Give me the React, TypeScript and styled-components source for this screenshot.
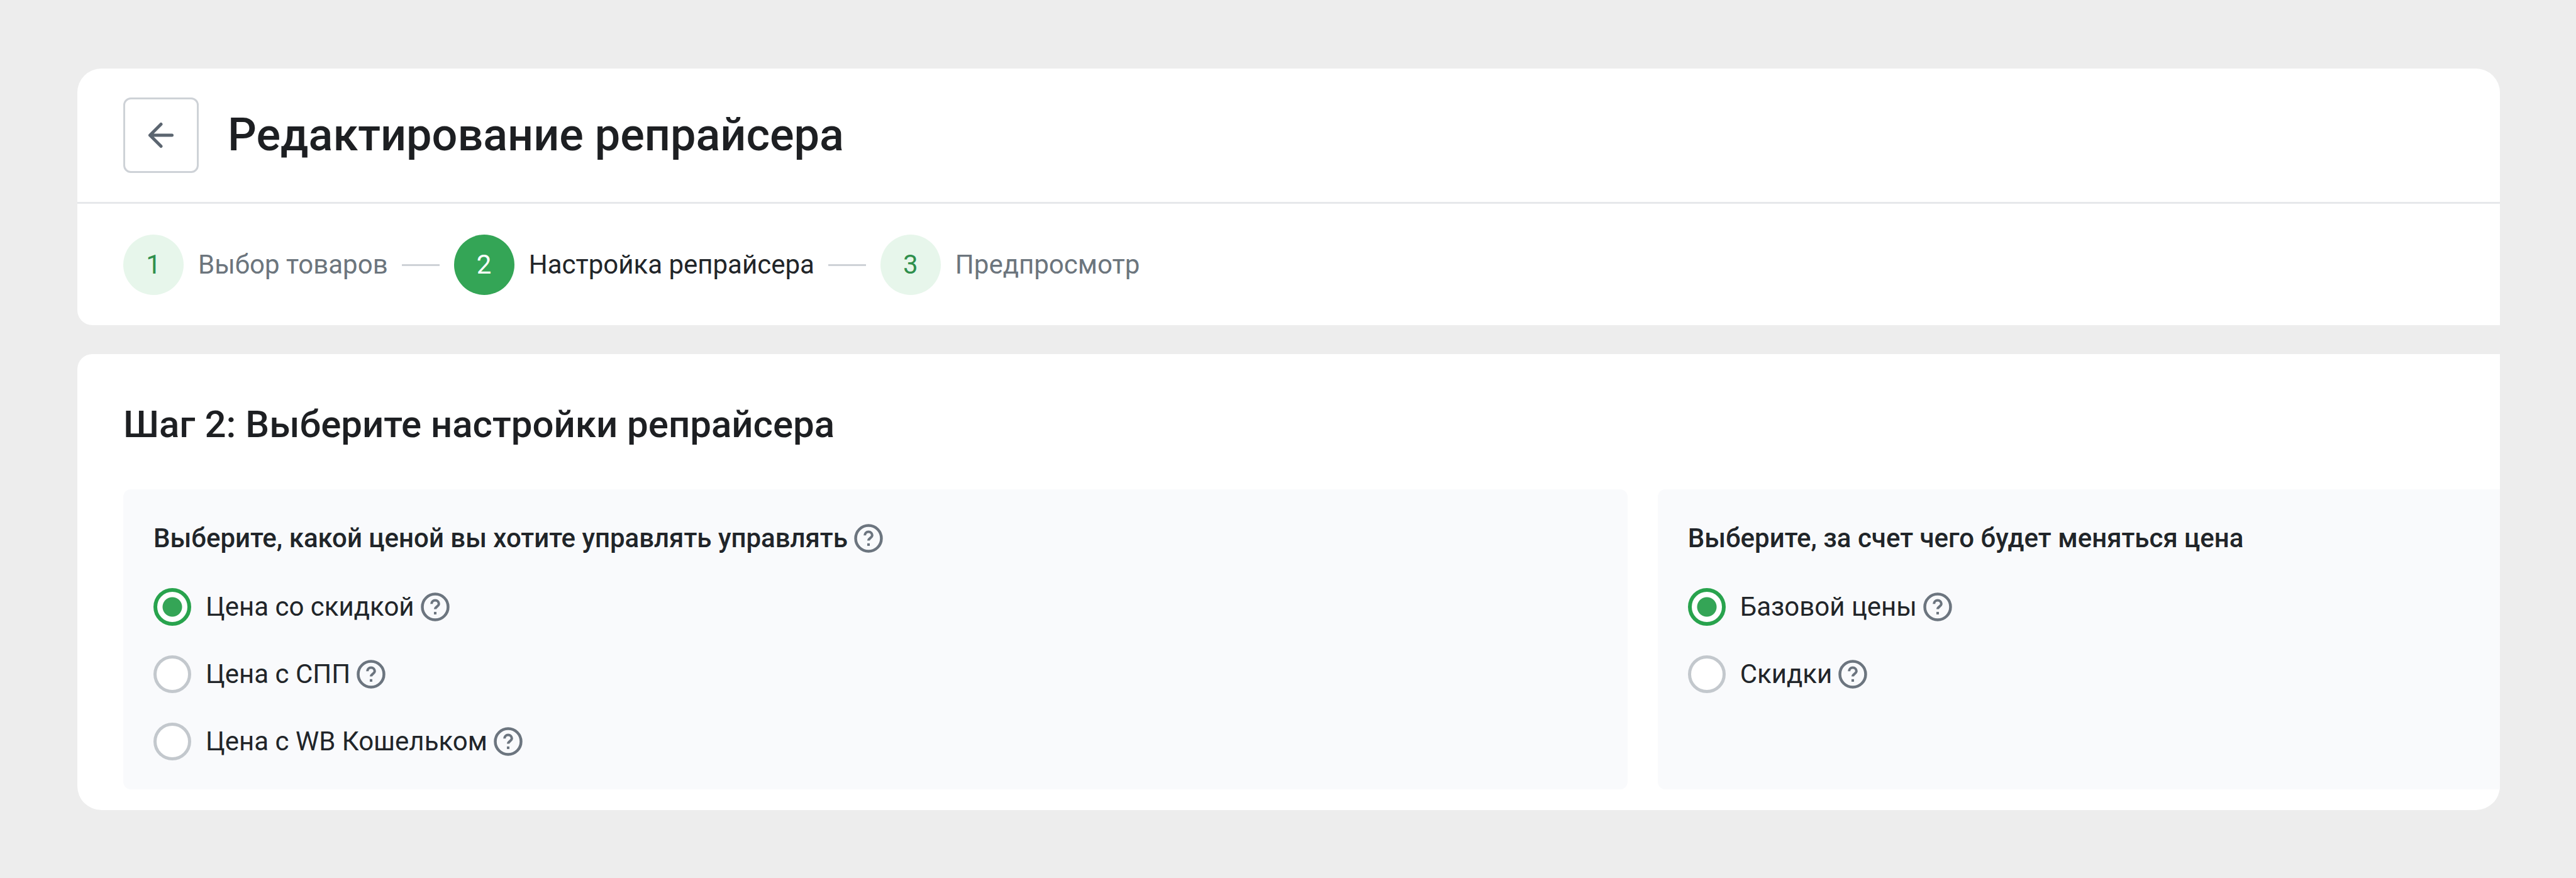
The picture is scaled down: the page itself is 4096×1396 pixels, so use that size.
import React, { useId, useState } from "react";
import styled, { createGlobalStyle } from "styled-components";

const GlobalStyle = createGlobalStyle`
  *, *::before, *::after { box-sizing: border-box; }
  body {
    margin: 0;
    background: #ededed;
    color: #212529;
    font-family: Roboto, "Noto Sans", sans-serif;
  }
  h1, h2, ol, fieldset, legend { margin: 0; padding: 0; border: 0; }
`;

const Page = styled.main`
  padding: 109px 121px 108px 123px;
`;

const Frame = styled.div`
  display: flex;
  flex-direction: column;
  gap: 46px;
  border-radius: 38px;
  overflow: hidden;
`;

const Card = styled.section`
  background: #fff;
`;

const HeaderCard = styled(Card)`
  border-bottom-left-radius: 24px;
`;

const SettingsCard = styled(Card)`
  border-top-left-radius: 24px;
  padding: 73px 0 33px 73px;
`;

const TitleBar = styled.header`
  display: flex;
  align-items: center;
  gap: 46px;
  padding: 46px 73px;
  border-bottom: 3px solid #e6e8eb;
`;

const BackButton = styled.button`
  display: grid;
  place-items: center;
  width: 120px;
  height: 120px;
  padding: 0;
  border: 3px solid #ced2d7;
  border-radius: 12px;
  background: #fff;
  color: #5b6570;
  cursor: pointer;
`;

const Title = styled.h1`
  font-size: 72px;
  font-weight: 500;
  line-height: 96px;
  color: #1d1f22;
`;

const Steps = styled.ol`
  display: flex;
  align-items: center;
  gap: 22px;
  padding: 49px 73px 48px;
  list-style: none;
`;

const Step = styled.li<{ $active?: boolean }>`
  display: flex;
  align-items: center;
  gap: 23px;
  font-size: 42px;
  line-height: 60px;
  color: ${(p) => (p.$active ? "#212529" : "#6c757d")};

  &:not(:first-child)::before {
    content: "";
    width: 60px;
    height: 3px;
    background: #ced2d7;
  }
`;

const StepNumber = styled.span<{ $active?: boolean }>`
  display: grid;
  place-items: center;
  width: 96px;
  height: 96px;
  border-radius: 50%;
  background: ${(p) => (p.$active ? "#34a556" : "#e7f6eb")};
  color: ${(p) => (p.$active ? "#fff" : "#2f8f4c")};
`;

const StepTitle = styled.h2`
  font-size: 60px;
  font-weight: 500;
  line-height: 78px;
  color: #1d1f22;
`;

const Panels = styled.div`
  display: grid;
  grid-template-columns: 25fr 14fr;
  gap: 48px;
  margin-top: 64px;
`;

const Panel = styled.fieldset`
  min-width: 0;
  padding: 42px 48px 40px;
  border-radius: 12px;
  background: #f9fafc;

  &:last-child {
    border-top-right-radius: 0;
    border-bottom-right-radius: 0;
  }
`;

const PanelTitle = styled.legend`
  float: left;
  width: 100%;
  display: flex;
  align-items: center;
  gap: 6px;
  margin-bottom: 37px;
  font-size: 42px;
  font-weight: 500;
  line-height: 72px;
`;

const Options = styled.div`
  clear: both;
  display: grid;
  gap: 35px;
`;

const Option = styled.div`
  display: flex;
  align-items: center;
  height: 72px;
`;

const Radio = styled.input`
  appearance: none;
  width: 60px;
  height: 60px;
  margin: 0 23px 0 0;
  border: 5px solid #c3c8cd;
  border-radius: 50%;
  background: #fff;

  &:checked {
    border: 6px solid #28a34d;
    background: radial-gradient(circle, #34a556 15px, #fff 16px);
  }
`;

const OptionLabel = styled.label`
  margin-right: 6px;
  font-size: 42px;
  line-height: 60px;
`;

const HelpButton = styled.button`
  display: grid;
  padding: 0;
  border: 0;
  background: none;
  color: #6c757f;
  cursor: help;
`;

function Help() {
  return (
    <HelpButton type="button" aria-label="Подсказка">
      <svg width="54" height="54" viewBox="0 0 24 24" fill="none" stroke="currentColor">
        <circle cx="12" cy="12" r="9.1" strokeWidth="2" />
        <path d="M9.4 9.9a2.6 2.6 0 0 1 5.2 0c0 1.7-2.6 2-2.6 3.7" strokeWidth="1.8" />
        <rect x="11.1" y="15.5" width="1.8" height="1.8" fill="currentColor" stroke="none" />
      </svg>
    </HelpButton>
  );
}

type Choice = { label: string };

function ChoicePanel({ title, help, choices }: { title: string; help?: boolean; choices: Choice[] }) {
  const id = useId();
  const [selected, setSelected] = useState(0);
  return (
    <Panel>
      <PanelTitle>
        {title}
        {help && <Help />}
      </PanelTitle>
      <Options>
        {choices.map((choice, i) => (
          <Option key={choice.label}>
            <Radio
              type="radio"
              id={`${id}-${i}`}
              name={id}
              checked={selected === i}
              onChange={() => setSelected(i)}
            />
            <OptionLabel htmlFor={`${id}-${i}`}>{choice.label}</OptionLabel>
            <Help />
          </Option>
        ))}
      </Options>
    </Panel>
  );
}

const steps = ["Выбор товаров", "Настройка репрайсера", "Предпросмотр"];
const priceChoices = [{ label: "Цена со скидкой" }, { label: "Цена с СПП" }, { label: "Цена с WB Кошельком" }];
const sourceChoices = [{ label: "Базовой цены" }, { label: "Скидки" }];

export default function App() {
  const current = 1;
  return (
    <>
      <GlobalStyle />
      <Page>
        <Frame>
          <HeaderCard>
            <TitleBar>
              <BackButton type="button" aria-label="Назад">
                <svg
                  width="60"
                  height="60"
                  viewBox="0 0 24 24"
                  fill="none"
                  stroke="currentColor"
                  strokeWidth="2"
                  strokeLinecap="round"
                  strokeLinejoin="round"
                >
                  <path d="M19 12H5M12 19l-7-7 7-7" />
                </svg>
              </BackButton>
              <Title>Редактирование репрайсера</Title>
            </TitleBar>
            <Steps>
              {steps.map((label, i) => (
                <Step key={label} $active={i === current} aria-current={i === current ? "step" : undefined}>
                  <StepNumber $active={i === current}>{i + 1}</StepNumber>
                  {label}
                </Step>
              ))}
            </Steps>
          </HeaderCard>
          <SettingsCard>
            <StepTitle>Шаг 2: Выберите настройки репрайсера</StepTitle>
            <Panels>
              <ChoicePanel title="Выберите, какой ценой вы хотите управлять управлять" help choices={priceChoices} />
              <ChoicePanel title="Выберите, за счет чего будет меняться цена" choices={sourceChoices} />
            </Panels>
          </SettingsCard>
        </Frame>
      </Page>
    </>
  );
}
